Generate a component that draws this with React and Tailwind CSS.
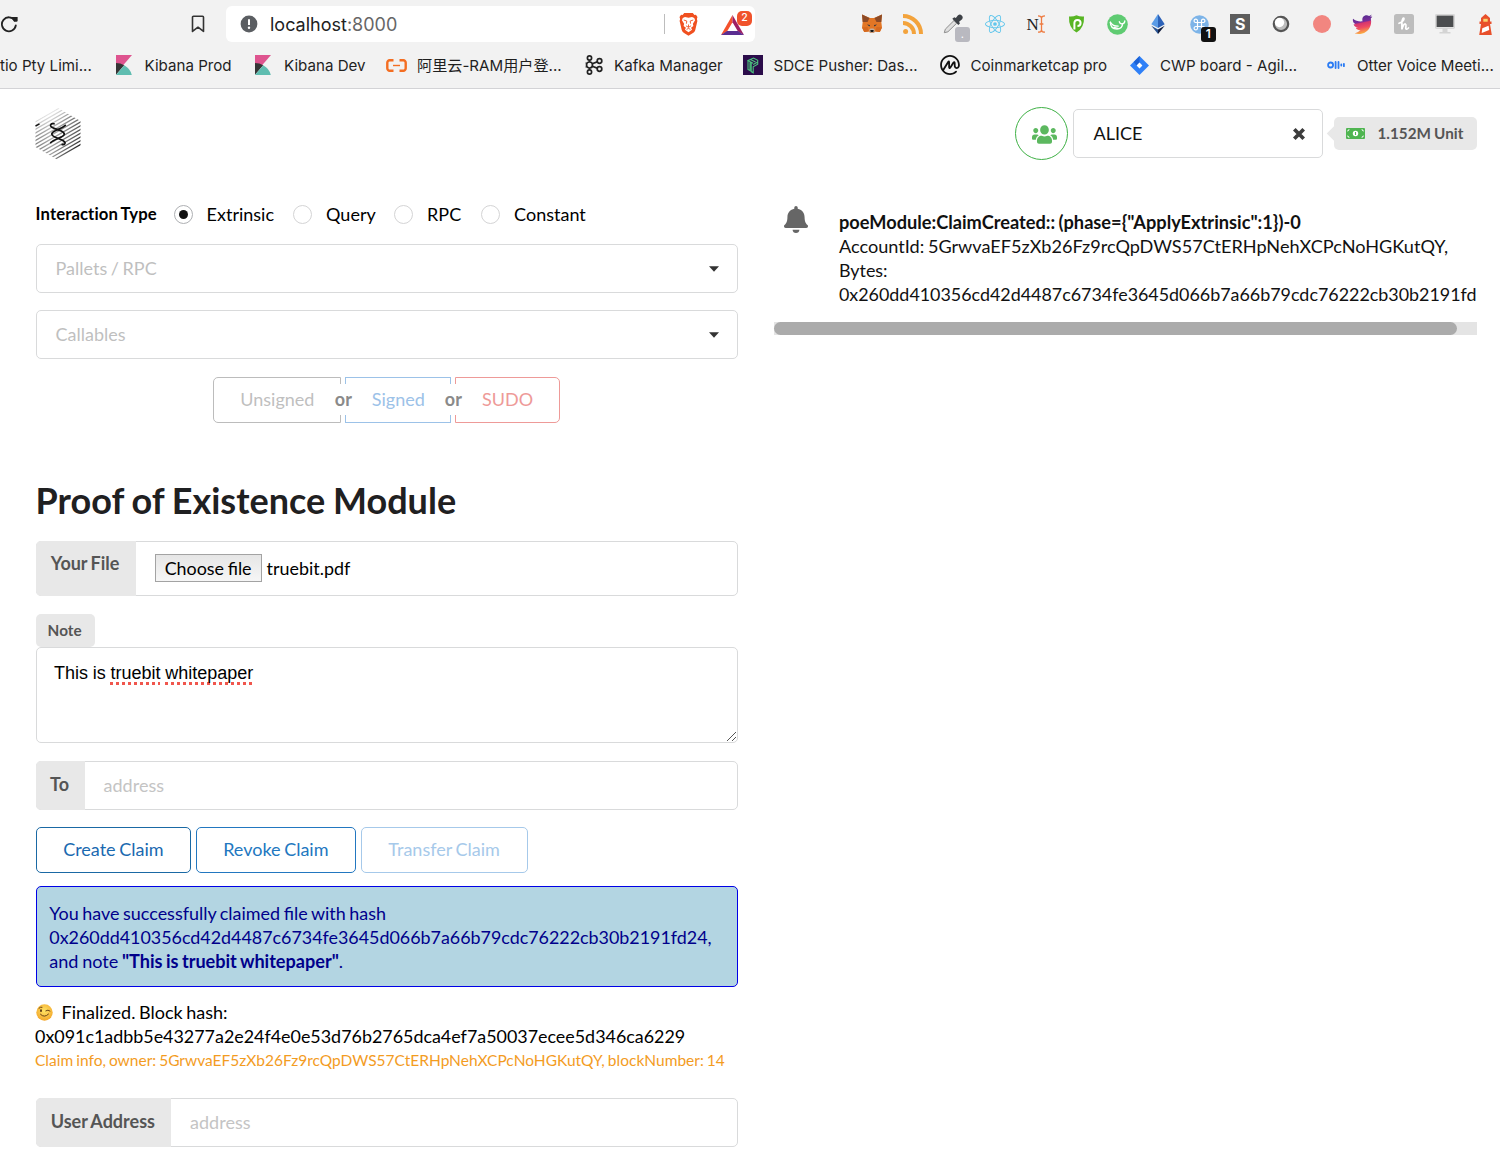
import React from 'react'
import { FaUsers, FaBell, FaTwitter } from 'react-icons/fa'
import { SiApachekafka, SiCoinmarketcap, SiReact } from 'react-icons/si'

/* ---------- toolbar icons ---------- */

const Reload = () => (
  <svg className="h-[18px] w-[19px] shrink-0" viewBox="0 0 19 18" fill="none">
    <path d="M14.6 5.2A7 7 0 1 0 15.8 10.5" stroke="#222" strokeWidth="1.8" strokeLinecap="round" />
    <path d="M11.2 1.9h6.4v3.6a1.2 1.2 0 0 1-1.2 1.2h-2.3z" fill="#222" />
  </svg>
)

const Bookmark = () => (
  <svg className="h-[18px] w-[14px]" viewBox="0 0 14 18" fill="none">
    <path d="M1.5 2.2a1 1 0 0 1 1-1h9a1 1 0 0 1 1 1V16.4L7 12.2 1.500 16.4z" stroke="#333" strokeWidth="1.6" strokeLinejoin="round" />
  </svg>
)

const Info = () => (
  <svg className="h-[18px] w-[18px] shrink-0" viewBox="0 0 18 18">
    <circle cx="9" cy="9" r="8.400" fill="#5b5e62" />
    <path d="M9 4.300v5.600" stroke="#fff" strokeWidth="2" />
    <circle cx="9" cy="12.700" r="1.200" fill="#fff" />
  </svg>
)

const Brave = () => (
  <svg className="h-[24px] w-[21px]" viewBox="0 0 22 24" preserveAspectRatio="none">
    <path d="M6.500 1h9l1.700 2 1.600-.2 1.600 2.200-.6 2 .5 2-2.200 9c-.4 1.300-1.200 2.200-2.400 3L11 23.800 6.300 21c-1.200-.8-2-1.700-2.400-3L1.700 9l.5-2-.6-2 1.600-2.200 1.600.2z" fill="#f05020" />
    <path d="M7.300 5l3.700.7 3.700-.7 2.300 1 .9 2.200-2.300 3.600.5 2.100-2.400 1.900 1 2L11 20.300l-3.700-2.500 1-2-2.400-1.900.5-2.100-2.300-3.600L5 6z" fill="#fff" />
    <path d="M6 8l3.200 1-.4 2.700M16 8l-3.200 1 .4 2.700M8.300 13.800l2.700 1.500 2.700-1.500M11 12.500v2.800M9 17.400l2-1 2 1" fill="none" stroke="#f05020" strokeWidth=".9" />
  </svg>
)

const Bat = () => (
  <svg className="h-[20px] w-[23px]" viewBox="0 0 23 20">
    <path d="M11.500 0v7.300L6 16.400 0 20z" fill="#f4512c" />
    <path d="M11.500 0L23 20l-6-3.600-5.500-9.100z" fill="#9e1f63" />
    <path d="M0 20l6-4h11l6 4z" fill="#5b2e91" />
  </svg>
)

const Fox = () => (
  <svg className="h-[20px] w-[22px]" viewBox="0 0 22 20">
    <path d="M1 .5L9 4h4l8-3.500L20.300 8l.7 5.500-2.200 4.500-4.300-.5L12.500 19h-3l-2-1.500-4.300.5L1 13.500 1.700 8z" fill="#e27625" />
    <path d="M1 .5L8.500 4l-2 4H1.700zM21 .5L13.500 4l2 4h4.800z" fill="#8c4a26" />
    <path d="M1 13.500l5.500-.4 1 4.400-4.300.5zM21 13.500l-5.500-.4-1 4.400 4.300.5z" fill="#d5691f" />
    <path d="M6 10.500l3 .6-.5 1.400zM16 10.500l-3 .6.5 1.400z" fill="#233447" />
    <path d="M8.500 15.500l1-1h3l1 1 .3 1.800-1.300 1.500h-3l-1.300-1.500z" fill="#c0ad9e" />
    <path d="M9.300 16h3.400l-.4 2H9.700z" fill="#161616" />
  </svg>
)

const Rss = () => (
  <svg className="h-[20px] w-[20px]" viewBox="0 0 20 20" fill="none" stroke="#f3a33c">
    <path d="M0 2a18 18 0 0 1 18 18M0 9a11 11 0 0 1 11 11" strokeWidth="4" />
    <circle cx="2.600" cy="17.400" r="2.500" fill="#f3a33c" stroke="none" />
  </svg>
)

const Dropper = () => (
  <span className="relative block h-[21px] w-[22px]">
    <svg className="h-[20px] w-[20px]" viewBox="0 0 20 20">
      <path d="M1.300 18.700l1-3.500L11 6.500l2.700 2.700-8.800 8.600z" fill="#e0e0e0" stroke="#8c8c8c" />
      <path d="M9.300 4.700l2-1.500 1.500.8 2.200-2.700a2.900 2.900 0 0 1 4.100 4l-3 2.400.8 1.800-1.600 1.600z" fill="#3d4146" />
    </svg>
    <span className="absolute left-[12px] top-[13px] flex h-[15px] w-[15px] items-center justify-center rounded-[3px] bg-[#b9b9c0] text-[11px] leading-none text-white">.</span>
  </span>
)

const NameTag = () => (
  <span className="flex items-center font-['Liberation_Serif'] text-[17px] font-medium leading-none text-[#222]">
    <span>N</span>
    <svg className="-ml-px h-[18px] w-[7px]" viewBox="0 0 7 18" fill="none" stroke="#ee7c42" strokeWidth="1.300">
      <path d="M0 .8q3.500 0 3.500 2.200v12q0 2.200-3.500 2.200M7 .8Q3.500.8 3.500 3v12q0 2.200 3.500 2.200M1.600 9h3.800" />
    </svg>
  </span>
)

const Shield = () => (
  <svg className="h-[18px] w-[17px]" viewBox="0 0 17 18">
    <path d="M1 1.500Q5 2 8.500.3 12 2 16 1.500q.6 11.500-7.500 16Q.4 13 1 1.500z" fill="#58b524" />
    <path d="M6.400 14.500V7.800a3.100 3.100 0 1 1 3.100 3.300" fill="none" stroke="#fff" strokeWidth="2" />
  </svg>
)

const Whale = () => (
  <svg className="h-[21px] w-[21px]" viewBox="0 0 21 21">
    <circle cx="10.500" cy="10.500" r="10.300" fill="#5fcb72" />
    <path d="M3.400 8.300c0 4.200 2.600 6.700 6.600 6.700 3.600 0 5.600-2.300 5.500-5.200" fill="none" stroke="#fff" strokeWidth="1.400" strokeLinecap="round" />
    <path d="M3.400 8.300c2 3.200 4.600 3.900 7.800 3.900M15.500 9.800c-1.800.2-2.900-.6-3.200-2.200M15.500 9.800c1.600-.4 2.400-1.400 2.300-3M7 13.500l4 .8" fill="none" stroke="#fff" strokeWidth="1.300" strokeLinecap="round" />
  </svg>
)

const Ethereum = () => (
  <svg className="h-[20px] w-[14px]" viewBox="0 0 14 20">
    <path d="M7 0L.3 10.300 7 14z" fill="#5a9be6" />
    <path d="M7 0l6.700 10.300L7 14z" fill="#2c62b8" />
    <path d="M.3 11.800L7 20v-4.500z" fill="#28518f" />
    <path d="M13.700 11.800L7 20v-4.500z" fill="#101c3d" />
  </svg>
)

const Command = () => (
  <span className="relative block h-[19px] w-[19px]">
    <svg className="h-[19px] w-[19px]" viewBox="0 0 19 19">
      <circle cx="9.500" cy="9.500" r="9.300" fill="#7db4e8" />
      <path d="M7.500 7.500h4v4h-4zM7.500 7.500H6a1.700 1.700 0 1 1 1.500-1.700zM11.500 7.500V6A1.700 1.700 0 1 1 13 7.500zM11.500 11.500H13a1.700 1.700 0 1 1-1.500 1.600zM7.500 11.500v1.600A1.700 1.700 0 1 1 6 11.500z" fill="none" stroke="#fff" strokeWidth="1.200" />
    </svg>
    <span className="absolute left-[11px] top-[12px] flex h-[15px] w-[15px] items-center justify-center rounded-[3px] bg-[#111] text-[12px] font-semibold leading-none text-white">1</span>
  </span>
)

const Sphere = () => (
  <svg className="h-[18px] w-[18px]" viewBox="0 0 18 18">
    <circle cx="9" cy="9" r="7.200" fill="#bdbdbd" stroke="#555" strokeWidth="2.200" />
    <circle cx="7.500" cy="7.500" r="4.700" fill="#fff" />
  </svg>
)

const Bird = () => (
  <>
    <svg className="h-0 w-0">
      <linearGradient id="bird" x1="0" y1="0" x2="0" y2="1">
        <stop offset="0" stopColor="#5a2d91" />
        <stop offset=".33" stopColor="#7a2d9a" />
        <stop offset=".4" stopColor="#d6366f" />
        <stop offset=".65" stopColor="#ef4a63" />
        <stop offset="1" stopColor="#fbb040" />
      </linearGradient>
    </svg>
    <FaTwitter className="h-[21px] w-[21px] shrink-0 -rotate-12" style={{ fill: 'url(#bird)' }} />
  </>
)

const Honey = () => (
  <svg className="h-[20px] w-[20px]" viewBox="0 0 20 20">
    <rect width="20" height="20" rx="2.500" fill="#bdbdbd" />
    <path d="M5 9.300C7.800 8.300 10.300 6 10 4.500 9.600 3.200 8 4.700 7.900 9v6.400c.8-3.600 2.200-5.700 3.500-5.400 1.400.4.200 3 .4 4.400.2 1.200 1.700 1 2.700-.5" fill="none" stroke="#fff" strokeWidth="1.700" strokeLinecap="round" />
  </svg>
)

const Monitor = () => (
  <svg className="h-[20px] w-[20px]" viewBox="0 0 20 20">
    <rect x=".4" y=".4" width="19.200" height="14" rx="1" fill="#e4e4e4" stroke="#cfcfcf" strokeWidth=".8" />
    <rect x="1.600" y="1.600" width="16.800" height="11.400" fill="#4b4d4f" />
    <path d="M7.500 14.400h5V18h3v1.500h-11V18h3z" fill="#d4d4d4" />
  </svg>
)

const Lighthouse = () => (
  <svg className="h-[21px] w-[15px]" viewBox="0 0 15 21">
    <path d="M7.500 0L3 4v3.500H1.500V10H3L1.200 21h12.600L12 10h1.500V7.500H12V4z" fill="#e8502b" />
    <path d="M5.300 4.800h4.400v2.900H5.300z" fill="#fbd36b" />
    <path d="M4.300 14.300l6.300-2.600.6 4.300-7.500 3z" fill="#fff" />
  </svg>
)

const EXTENSIONS = [
  <Fox />,
  <Rss />,
  <Dropper />,
  <SiReact className="h-[20px] w-[20px] text-[#61c6ec]" />,
  <NameTag />,
  <Shield />,
  <Whale />,
  <Ethereum />,
  <Command />,
  <span className="flex h-[20px] w-[20px] items-center justify-center bg-[#5e5e5e] text-[16px] font-bold leading-none text-white">S</span>,
  <Sphere />,
  <span className="block h-[18px] w-[18px] rounded-full bg-[#f28680]" />,
  <Bird />,
  <Honey />,
  <Monitor />,
  <Lighthouse />,
]

/* ---------- bookmark icons ---------- */

const Kibana = () => (
  <svg className="h-[20px] w-[16px]" viewBox="0 0 16 20">
    <path d="M0 0h16L0 18.500z" fill="#de548f" />
    <path d="M0 8q4.500 0 8.200 2.300L0 19.800z" fill="#353535" />
    <path d="M8.200 10.300Q14.500 13.800 15.800 20H0z" fill="#5fbdb0" />
  </svg>
)

const Aliyun = () => (
  <svg className="h-[13px] w-[21px]" viewBox="0 0 21 13" fill="none" stroke="#f46e22">
    <path d="M7.500 1.200H4A2.500 2.500 0 0 0 1.300 3.700v5.600A2.500 2.500 0 0 0 4 11.800h3.500M13.500 1.200H17a2.500 2.500 0 0 1 2.700 2.500v5.600a2.500 2.500 0 0 1-2.700 2.500h-3.500" strokeWidth="2.400" />
    <path d="M7 6.500h7" strokeWidth="1.400" />
  </svg>
)

const Kafka = () => (
  <svg className="h-[20px] w-[20px]" viewBox="0 0 20 20" fill="none" stroke="#222" strokeWidth="1.700">
    <circle cx="5.500" cy="3" r="2.100" />
    <circle cx="5.500" cy="17" r="2.100" />
    <circle cx="5.500" cy="10" r="3" />
    <circle cx="15.500" cy="6" r="2.300" />
    <circle cx="15.500" cy="14" r="2.300" />
    <path d="M5.500 5v2M5.500 13v2M8.200 8.700l5-1.800M8.200 11.300l5 1.800" />
    <path d="M2.800 8.500l-1.200-.7M2.800 11.500l-1.200.7" strokeWidth="1.200" />
  </svg>
)

const Pusher = () => (
  <svg className="h-[20px] w-[20px]" viewBox="0 0 20 20">
    <rect width="20" height="20" fill="#2b0c4a" />
    <path d="M5 5.500v9l2 1.100V7.300M8.200 7.300v9.300l2 1.100v-5.900l4.500-2.500V5.300L10.500 3 5 5.500l5 2.700M7.500 4.400l5 2.700M10.200 9.500l4.500-2.400" fill="none" stroke="#4bc37d" strokeWidth="1.100" />
  </svg>
)

const Jira = () => (
  <svg className="h-[19px] w-[19px]" viewBox="0 0 19 19">
    <path d="M9.500 0L19 9.500 9.500 19 0 9.500z" fill="#2f80f7" />
    <path d="M9.500 0v6.500L6.500 9.500 3.700 6z" fill="#1d62d6" />
    <path d="M9.500 6.600l2.900 2.900-2.900 2.900-2.900-2.900z" fill="#fff" />
  </svg>
)

const Otter = () => (
  <svg className="h-[8px] w-[18px]" viewBox="0 0 18 8" fill="none" stroke="#2a7bf3" strokeWidth="1.800" strokeLinecap="round">
    <circle cx="3.600" cy="4" r="2.500" />
    <path d="M8.600 1v6M11.500 1v6M14.300 3.500v1M16.900 2.800v2.400" />
  </svg>
)

const BOOKMARKS = [
  { icon: <Kibana />, label: 'Kibana Prod', item: 'w-[139px]', box: 'w-[28.500px]' },
  { icon: <Kibana />, label: 'Kibana Dev', item: 'w-[131px]', box: 'w-[29px]' },
  { icon: <Aliyun />, label: '阿里云-RAM用户登...', item: 'w-[198px]', box: 'w-[31px]' },
  { icon: <Kafka />, label: 'Kafka Manager', item: 'w-[159px]', box: 'w-[30px]' },
  { icon: <Pusher />, label: 'SDCE Pusher: Das...', item: 'w-[197px]', box: 'w-[30.500px]' },
  { icon: <SiCoinmarketcap className="h-[20px] w-[20px] text-[#111]" />, label: 'Coinmarketcap pro', item: 'w-[190px]', box: 'w-[30.500px]' },
  { icon: <Jira />, label: 'CWP board - Agil...', item: 'w-[197px]', box: 'w-[30px]' },
  { icon: <Otter />, label: 'Otter Voice Meeti...', item: 'w-[180px]', box: 'w-[30px]' },
]

function BrowserChrome() {
  return (
    <div className="h-[89px] w-full overflow-hidden border-b border-[#d3d3d6] bg-[#f2f2f2] font-['Inter','Noto_Sans_CJK_SC',sans-serif] text-[#1f1f1f]">
      <div className="flex h-[48px] items-center">
        <Reload />
        <span className="ml-[172px]"><Bookmark /></span>
        <div className="ml-[21px] flex h-[36px] w-[529px] shrink-0 items-center rounded-[6px] bg-white pl-[14px]">
          <Info />
          <span className="ml-[12px] w-[394px] shrink-0 pt-px text-[18px] leading-none text-[#222]">
            localhost<span className="text-[#666]">:8000</span>
          </span>
          <span className="h-[20px] w-px shrink-0 bg-[#bdbdbd]" />
          <span className="ml-[13px] shrink-0"><Brave /></span>
          <span className="relative ml-[22px] mt-[2px] shrink-0">
            <Bat />
            <span className="absolute -top-[4px] left-[16px] flex h-[15px] w-[15px] items-center justify-center rounded-[5px] bg-[#f0532c] text-[10.500px] font-medium leading-none text-white">2</span>
          </span>
        </div>
        <div className="ml-[96.500px] flex">
          {EXTENSIONS.map((icon, i) => (
            <span key={i} className="flex h-[24px] w-[40.930px] shrink-0 items-center justify-center">{icon}</span>
          ))}
        </div>
      </div>
      <div className="flex h-[34px] items-center whitespace-nowrap text-[15.130px] leading-none">
        <span className="w-[116px] shrink-0 pt-px">tio Pty Limi...</span>
        {BOOKMARKS.map((b, i) => (
          <span key={i} className={`flex shrink-0 items-center ${b.item}`}>
            <span className={`shrink-0 ${b.box}`}>{b.icon}</span>
            <span className="pt-px">{b.label}</span>
          </span>
        ))}
      </div>
    </div>
  )
}

/* ---------- page ---------- */

const HATCH = [0.2, 0.3, 0.4, 0.5, 0.6, 0.65, 0.65, 0.7, 0.7, 0.75, 0.75, 0.8, 0.85, 0.95]

function Logo() {
  return (
    <svg className="h-[52px] w-[46px]" viewBox="0 0 46 52">
      <defs>
        <clipPath id="hex"><path d="M23 0L45.500 13v26L23 52 .5 39V13z" /></clipPath>
        <linearGradient id="fade" x1="0" x2="46" y1="0" y2="0" gradientUnits="userSpaceOnUse">
          <stop offset="0" stopColor="#444" /><stop offset=".35" stopColor="#888" /><stop offset="1" stopColor="#111" />
        </linearGradient>
      </defs>
      <g clipPath="url(#hex)" stroke="url(#fade)" strokeWidth="1.150">
        {HATCH.map((o, i) => (
          <path key={i} d={`M-1 ${14.6 + i * 3.75}L47 ${-13.1 + i * 3.75}`} opacity={o} />
        ))}
      </g>
      <path d="M.5 18.200l4-2.300" stroke="#111" strokeWidth="1.500" />
      <g fill="none" stroke="#111" strokeWidth="1.700" strokeLinecap="round">
        <path d="M19 15.800c-3-.8-4.500 1.500-2.700 3 2.500 2 6 2.200 10 4.200 4.300 2.300 3.700 4.300 0 6-4.300 2-8.300 3.200-10.600 5.600" />
        <path d="M30.300 17.300c-3.500 3.200-7 3.800-10.500 5.700-4.300 2.300-3.700 4.300 0 6 3.700 1.900 7.400 2.600 9.600 4.600 1.600 1.500.3 3.600-2.200 3" />
      </g>
    </svg>
  )
}

const Caret = () => (
  <svg className="h-[6px] w-[10px]" viewBox="0 0 10 6"><path d="M0 .3h10L5 5.700z" fill="#333" /></svg>
)

const Dropdown = ({ label }) => (
  <div className="flex h-[49px] items-center justify-between rounded-[5px] border border-[#d9dadb] pl-[19px] pr-[18px] text-[18px] text-[#bfbfbf]">
    {label}
    <Caret />
  </div>
)

const RADIOS = [
  { label: 'Extrinsic', width: 'w-[119.500px]', on: true },
  { label: 'Query', width: 'w-[101px]' },
  { label: 'RPC', width: 'w-[87px]' },
  { label: 'Constant', width: 'w-[110px]' },
]

const Or = () => (
  <span className="relative w-[4px]">
    <span className="absolute -left-[13px] top-[7px] flex h-[31px] w-[30px] items-center justify-center bg-white text-[18px] font-bold text-[#8a8a8a]">or</span>
  </span>
)

const Wink = () => (
  <svg className="mr-[9px] h-[17px] w-[17px]" viewBox="0 0 17 17">
    <defs>
      <radialGradient id="face" cx=".5" cy=".4" r=".6"><stop offset="0" stopColor="#ffe566" /><stop offset="1" stopColor="#f3a72b" /></radialGradient>
    </defs>
    <circle cx="8.500" cy="8.500" r="8.200" fill="url(#face)" />
    <ellipse cx="5" cy="6.700" rx="1" ry="1.400" fill="#5c3a12" />
    <path d="M3 4.200q1.500-1.500 3-1M9.800 6.800q2.200-1.600 4.200.2M4.500 10.300q3.800 4 8-.2" fill="none" stroke="#6a4314" strokeWidth="1" strokeLinecap="round" />
  </svg>
)

function Account() {
  return (
    <div className="flex items-center">
      <span className="flex h-[53px] w-[53px] items-center justify-center rounded-full border border-[#3fb146] pl-[5px]">
        <FaUsers className="mt-px h-[21px] w-[25px] text-[#5cb85f]" preserveAspectRatio="none" />
      </span>
      <div className="ml-[5px] flex h-[49px] w-[250px] items-center justify-between rounded-[5px] border border-[#d9dadb] pl-[19.500px] pr-[16px] text-[18px] text-[#111]">
        ALICE
        <svg className="h-[14px] w-[14px]" viewBox="0 0 14 14"><path d="M2.300 2.300l9.400 9.400M11.700 2.300l-9.400 9.400" stroke="#3c3c3c" strokeWidth="3.700" /></svg>
      </div>
      <div className="relative ml-[11px] flex h-[33px] w-[143px] items-center rounded-[5px] bg-[#e8e8e8] pl-[12px] text-[15.250px] font-bold text-[#555]">
        <span className="absolute -left-[5px] top-[11px] h-[11px] w-[11px] rotate-45 bg-[#e8e8e8]" />
        <svg className="relative mr-[12.500px] h-[11px] w-[19px] shrink-0" viewBox="0 0 19 11">
          <rect width="19" height="11" rx="1" fill="#4fb551" />
          <circle cx="9.500" cy="5.500" r="2.700" fill="#fff" />
          <path d="M9.500 4v3" stroke="#4fb551" strokeWidth="1.100" />
          <path d="M1.200 3q1.800 0 1.800-1.800M17.800 3Q16 3 16 1.200M1.200 8q1.800 0 1.800 1.800M17.800 8Q16 8 16 9.800" fill="none" stroke="#fff" strokeWidth="1" />
        </svg>
        1.152M Unit
      </div>
    </div>
  )
}

const LabelledInput = ({ label, size, lift = '' }) => (
  <div className="flex h-[48.500px] rounded-[5px] border border-[#d9dadb]">
    <span className={`-my-px -ml-px flex shrink-0 items-center justify-center rounded-l-[5px] bg-[#e8e8e8] pb-[3px] pr-px text-[18px] font-bold text-[#555] ${size}`}>{label}</span>
    <span className={`flex items-center pl-[19px] text-[18px] text-[#c4c4c4] ${lift}`}>address</span>
  </div>
)

export default function App() {
  return (
    <div className="h-[1161px] w-[1500px] overflow-hidden bg-white font-['Lato',sans-serif] leading-[24.300px] text-black">
      <BrowserChrome />

      <header className="flex h-[89px] items-center justify-between pl-[35px] pr-[23px] [word-spacing:-0.500px]">
        <Logo />
        <Account />
      </header>

      <main className="flex gap-[36.400px] pl-[35.600px] pr-[23px] [word-spacing:-1px]">
        <section className="w-[702px] shrink-0">
          <div className="mt-[24px] flex h-[24px] items-center text-[18px]">
            <span className="w-[138px] text-[16.700px] font-bold tracking-[0.100px] [font-variant-ligatures:none]">Interaction Type</span>
            {RADIOS.map((r) => (
              <span key={r.label} className={`flex shrink-0 items-center ${r.width}`}>
                <span className={`mr-[14px] flex h-[19px] w-[19px] items-center justify-center rounded-full border ${r.on ? 'border-[#aeb0b3]' : 'border-[#d4d4d5]'}`}>
                  {r.on && <span className="h-[9px] w-[9px] rounded-full bg-[#111]" />}
                </span>
                {r.label}
              </span>
            ))}
          </div>

          <div className="mt-[18px]"><Dropdown label="Pallets / RPC" /></div>
          <div className="mt-[17px]"><Dropdown label="Callables" /></div>

          <div className="mt-[18px] flex h-[46px] justify-center text-[18px]">
            <span className="flex w-[128px] items-center justify-center rounded-l-[5px] border border-[#bcbcbc] pb-px text-[#bfbfbf]">Unsigned</span>
            <Or />
            <span className="flex w-[106px] items-center justify-center border border-[#9cc2e8] pb-px text-[#9cc2e8]">Signed</span>
            <Or />
            <span className="flex w-[104.500px] items-center justify-center rounded-r-[5px] border border-[#ee9a98] pb-px text-[#ee9a98]">SUDO</span>
          </div>

          <h1 className="mt-[53px] h-[49px] text-[36px] font-bold leading-[48px] tracking-[0.010px] text-[#1f2021]">Proof of Existence Module</h1>

          <div className="mt-[16px] flex h-[55px] rounded-[5px] border border-[#d9dadb]">
            <span className="-my-px -ml-px flex w-[100px] items-center justify-center rounded-l-[5px] bg-[#e8e8e8] pb-[10px] pr-px text-[18px] font-bold text-[#555]">Your File</span>
            <span className="flex items-center pl-[19px] text-[17.900px]">
              <span className="mb-[2px] mr-[5px] flex h-[28px] w-[107px] items-center justify-center border border-[#a3a3a3] bg-gradient-to-b from-[#e6e6e6] to-[#f6f6f6] pt-px">Choose file</span>
              truebit.pdf
            </span>
          </div>

          <div className="mt-[18px] flex h-[33px] w-[59px] items-center justify-center rounded-[5px] bg-[#e8e8e8] pb-px pr-px text-[15.300px] font-bold text-[#555]">Note</div>
          <div className="relative h-[96px] rounded-[5px] border border-[#d9dadb] pl-[17.500px] pt-[13px] font-['Liberation_Sans'] text-[18px] [word-spacing:-0.300px]">
            This is{' '}
            <span className="underline decoration-[#f0564d] decoration-dotted decoration-[2.500px] underline-offset-[3px] [text-decoration-skip-ink:none]">truebit</span>{' '}
            <span className="underline decoration-[#f0564d] decoration-dotted decoration-[2.500px] underline-offset-[3px] [text-decoration-skip-ink:none]">whitepaper</span>
            <svg className="absolute bottom-[1px] right-[1px] h-[9px] w-[9px]" viewBox="0 0 9 9"><path d="M0 9L9 0M5 9l4-4" stroke="#555" strokeWidth="1" /></svg>
          </div>

          <div className="mt-[18px]"><LabelledInput label="To" size="w-[49px]" lift="pb-px" /></div>

          <div className="mt-[17.500px] flex h-[46px] gap-[4.500px] text-[18px]">
            <span className="flex w-[155.500px] items-center justify-center rounded-[5px] border border-[#1a69a4] pb-px text-[#1a69b0]">Create Claim</span>
            <span className="flex w-[160.500px] items-center justify-center rounded-[5px] border border-[#2277c0] pb-px text-[#2277c0]">Revoke Claim</span>
            <span className="flex w-[167px] items-center justify-center rounded-[5px] border border-[#a6c9ea] pb-px text-[#a6c9ea]">Transfer Claim</span>
          </div>

          <div className="mt-[13px] h-[101px] whitespace-nowrap rounded-[5px] border border-[#0000e6] bg-[#b3d5e2] pl-[12.700px] pt-[13.500px] text-[17.890px] text-[#00008b]">
            <p className="text-[17.950px]">You have successfully claimed file with hash</p>
            <p>0x260dd410356cd42d4487c6734fe3645d066b7a66b79cdc76222cb30b2191fd24,</p>
            <p className="text-[18.100px]">and note <b>"This is truebit whitepaper"</b>.</p>
          </div>

          <div className="mt-[13px] whitespace-nowrap text-[17.900px]">
            <p className="flex items-center text-[18px]"><Wink />Finalized. Block hash:</p>
            <p className="-ml-[0.600px]">0x091c1adbb5e43277a2e24f4e0e53d76b2765dca4ef7a50037ecee5d346ca6229</p>
            <p className="-ml-[0.600px] -mt-[0.600px] text-[15.530px] text-[#f39c1f]">Claim info, owner: 5GrwvaEF5zXb26Fz9rcQpDWS57CtERHpNehXCPcNoHGKutQY, blockNumber: 14</p>
          </div>

          <div className="mt-[26px]"><LabelledInput label="User Address" size="w-[135.500px]" /></div>
        </section>

        <section className="min-w-0 flex-1 pt-[28px]">
          <div className="flex pl-[10px]">
            <FaBell className="h-[27px] w-[24px] shrink-0 text-[#666]" preserveAspectRatio="none" />
            <div className="ml-[31px] whitespace-nowrap pt-[3.500px] text-[17.890px] text-[#111]">
              <p className="text-[18.220px]">
                <b>{'poeModule:ClaimCreated:: (phase={"ApplyExtrinsic":1})-0'}</b>
              </p>
              <p className="text-[18.110px]">AccountId: 5GrwvaEF5zXb26Fz9rcQpDWS57CtERHpNehXCPcNoHGKutQY,</p>
              <p>Bytes:</p>
              <p>0x260dd410356cd42d4487c6734fe3645d066b7a66b79cdc76222cb30b2191fd</p>
            </div>
          </div>
          <div className="mt-[15px] h-[13px] bg-[#e4e4e4]">
            <div className="h-full w-[683px] rounded-full bg-[#ababab]" />
          </div>
        </section>
      </main>
    </div>
  )
}
